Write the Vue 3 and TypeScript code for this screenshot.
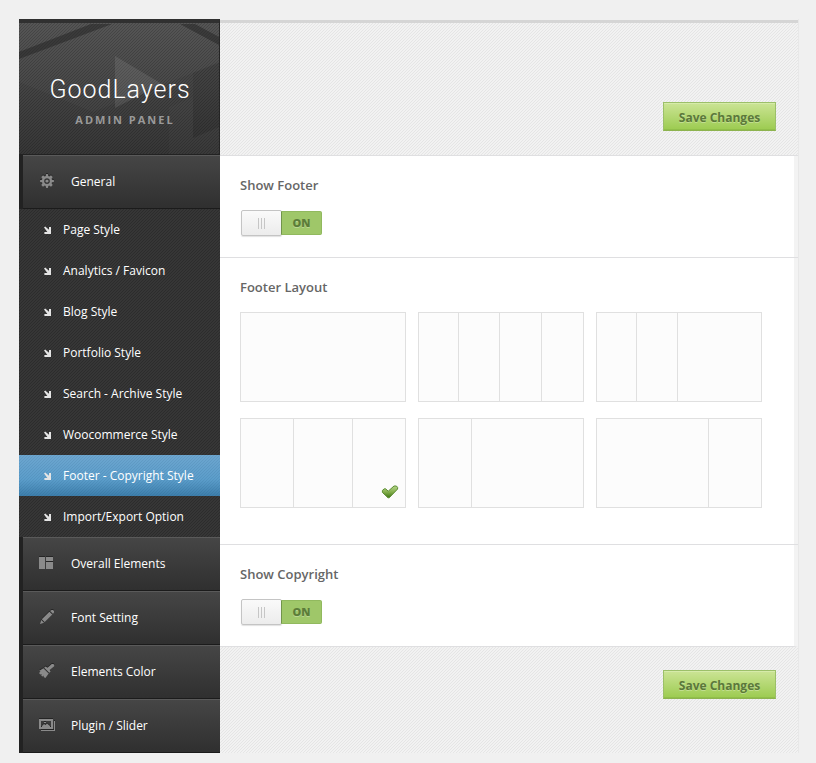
<script setup lang="ts">
import { ref } from 'vue'

type IconName = 'gear' | 'grid' | 'pencil' | 'brush' | 'gallery'

interface MenuGroup {
  label: string
  icon: IconName
  children: string[]
}

interface FooterLayout {
  id: string
  label: string
  columns: number[]
}

const menu: MenuGroup[] = [
  {
    label: 'General',
    icon: 'gear',
    children: [
      'Page Style',
      'Analytics / Favicon',
      'Blog Style',
      'Portfolio Style',
      'Search - Archive Style',
      'Woocommerce Style',
      'Footer - Copyright Style',
      'Import/Export Option',
    ],
  },
  { label: 'Overall Elements', icon: 'grid', children: [] },
  { label: 'Font Setting', icon: 'pencil', children: [] },
  { label: 'Elements Color', icon: 'brush', children: [] },
  { label: 'Plugin / Slider', icon: 'gallery', children: [] },
]

const layouts: FooterLayout[] = [
  { id: 'full', label: 'One column', columns: [100] },
  { id: 'quarters', label: 'Four columns', columns: [39, 40, 41, 41] },
  { id: 'quarters-half', label: 'Two quarters and a half', columns: [24, 25, 51] },
  { id: 'thirds', label: 'Three columns', columns: [32, 36, 32] },
  { id: 'third-left', label: 'One third and two thirds', columns: [32, 68] },
  { id: 'third-right', label: 'Two thirds and one third', columns: [68, 32] },
]

const activePage = ref('Footer - Copyright Style')
const showFooter = ref(true)
const showCopyright = ref(true)
const footerLayout = ref('thirds')
const generalOpen = ref(true)
</script>

<template>
  <div class="panel">
    <aside class="sidebar">
      <div class="brand">
        <svg class="brand-art" viewBox="0 0 200 131" preserveAspectRatio="none" aria-hidden="true">
          <path d="M0 0H200V40L174 50 74 89 0 59Z" fill="#fff" opacity=".025" />
          <path d="M0 29 72 1H93L0 36ZM161 1H176L200 14V22Z" fill="#222" opacity=".5" />
          <path d="M96 33 143 61 96 85Z" fill="#fff" opacity=".09" />
          <path d="M174 50 200 39V104L174 115Z" fill="#000" opacity=".07" />
          <path d="M150 84 174 74V115L200 104V131H150Z" fill="#fff" opacity=".015" />
        </svg>
        <div class="brand-name">GoodLayers</div>
        <div class="brand-sub">ADMIN PANEL</div>
      </div>
      <nav>
        <div v-for="group in menu" :key="group.label">
          <button class="group" type="button" @click="group.children.length && (generalOpen = !generalOpen)">
            <svg class="icon" viewBox="0 0 16 16" aria-hidden="true">
              <g v-if="group.icon === 'gear'">
                <path fill-rule="evenodd" d="M7.2 1h1.6l.5 2 1 .4L12 2.3 13.7 4l-1.1 1.7.4 1 2 .5v1.6l-2 .5-.4 1 1.1 1.7-1.7 1.7-1.7-1.1-1 .4-.5 2H7.2l-.5-2-1-.4L4 13.7 2.3 12l1.1-1.7-.4-1-2-.5V7.2l2-.5.4-1L2.3 4 4 2.3l1.7 1.1 1-.4ZM8 5.2a2.8 2.8 0 1 0 0 5.6 2.8 2.8 0 0 0 0-5.6Z" />
                <circle cx="8" cy="8" r="1.6" />
              </g>
              <path v-else-if="group.icon === 'grid'" d="M0 2h6v12H0zM7 2h7v4H7zM7 7h7v7H7z" />
              <path v-else-if="group.icon === 'pencil'" d="M11.2 2 12.6 1H14l1 1v1.4l-1 1.4ZM10.4 2.7l2.9 2.9-7.6 7.5-2.9-2.9ZM2.2 11l2.8 2.8L1 15Z" />
              <path v-else-if="group.icon === 'brush'" d="M12.8 1h1.6l.8.9v1.3L10.6 7l1 1.6-1.3 1.2L5.2 4.7l1.3-1.2 2 1.2ZM4.4 5.3l5.3 5.2L6.4 15l-1.8-1 .3-1.4-1.4.8-1.4-1.2.7-1.3-1.5.6L0 10.1l1.4-1.5L0 8Z" />
              <g v-else>
                <path fill-rule="evenodd" d="M0 2h14v10H0zM2 4v6h10V4z" />
                <path d="M15 4h1v10H2v-1h13Z" />
                <path d="M3 9 5 7l1.5 1L8 6.5 11 9v1H3ZM5 5h2v1H5z" />
              </g>
            </svg>
            {{ group.label }}
          </button>
          <ul v-if="group.children.length && generalOpen" class="children">
            <li v-for="child in group.children" :key="child">
              <a href="#" :class="['child', { active: child === activePage }]" @click.prevent="activePage = child">
                <svg class="arrow" viewBox="0 0 8 8" aria-hidden="true">
                  <path d="M1 1.6 2.2.4 6 3.8V1H8V8H1.4V6H4.4Z" />
                </svg>
                {{ child }}
              </a>
            </li>
          </ul>
        </div>
      </nav>
    </aside>

    <main class="content">
      <header class="bar top-bar">
        <button class="save" type="button">Save Changes</button>
      </header>

      <div class="options">
        <section class="option">
          <label class="title" for="show-footer">Show Footer</label>
          <label :class="['switch', { off: !showFooter }]">
            <input id="show-footer" v-model="showFooter" type="checkbox" />
            <span class="knob"><i></i><i></i><i></i></span>
            <span class="state">{{ showFooter ? 'ON' : 'OFF' }}</span>
          </label>
        </section>

        <section class="option layout-option">
          <h2 id="layout-title" class="title">Footer Layout</h2>
          <div class="layouts" role="radiogroup" aria-labelledby="layout-title">
            <label v-for="item in layouts" :key="item.id" class="layout">
              <input v-model="footerLayout" type="radio" name="layout" :value="item.id" :aria-label="item.label" />
              <span v-for="(size, i) in item.columns" :key="i" class="column" :style="{ flexGrow: size }"></span>
              <svg v-if="item.id === footerLayout" class="check" viewBox="0 0 18 14" aria-hidden="true">
                <defs>
                  <linearGradient id="check-fill" x1="0" y1="0" x2="0" y2="1">
                    <stop offset="0" stop-color="#b5d68b" />
                    <stop offset=".5" stop-color="#86b04e" />
                    <stop offset="1" stop-color="#3d7512" />
                  </linearGradient>
                </defs>
                <path d="M1.4 5.4 3.3 3.8H4.6L7.2 6.2 13 1H15.4L16.6 2.4V4L8.2 12.8H7L1.4 7.4Z" fill="url(#check-fill)" stroke="#5c8c32" stroke-linejoin="round" />
              </svg>
            </label>
          </div>
        </section>

        <section class="option">
          <label class="title" for="show-copyright">Show Copyright</label>
          <label :class="['switch', { off: !showCopyright }]">
            <input id="show-copyright" v-model="showCopyright" type="checkbox" />
            <span class="knob"><i></i><i></i><i></i></span>
            <span class="state">{{ showCopyright ? 'ON' : 'OFF' }}</span>
          </label>
        </section>
      </div>

      <footer class="bar bottom-bar">
        <button class="save" type="button">Save Changes</button>
      </footer>
    </main>
  </div>
</template>

<style>
body {
  background: #f0f0f0;
}
</style>

<style scoped>
.panel,
.panel * {
  box-sizing: border-box;
}

.panel {
  display: flex;
  margin: 19px 17px 10px 19px;
  font-family: "Open Sans", "Liberation Sans", sans-serif;
  font-size: 12px;
}

.sidebar {
  flex: 0 0 201px;
  background-color: #303030;
}

.brand {
  position: relative;
  height: 136px;
  padding-top: 52px;
  border-top: 4px solid #303030;
  border-right: 1px solid #252525;
  border-bottom: 1px solid #222;
  text-align: center;
  background:
    linear-gradient(135deg, transparent 42%, rgba(0, 0, 0, 0.18) 42% 58%, transparent 58%) 0 0 / 3px 3px,
    linear-gradient(#515151, #363636);
}

.brand-art {
  position: absolute;
  inset: 0;
  width: 100%;
  height: 100%;
}

.brand-name {
  position: relative;
  padding-left: 2px;
  font: 300 25px/30px Roboto, sans-serif;
  letter-spacing: 1px;
  color: #fff;
}

.brand-sub {
  position: relative;
  margin-top: 7px;
  padding-left: 12px;
  font-size: 11px;
  font-weight: 700;
  line-height: 16px;
  letter-spacing: 2px;
  color: #999;
}

.group {
  display: flex;
  align-items: center;
  gap: 16px;
  width: 100%;
  height: 54px;
  padding: 0 16px 1px;
  border: 0;
  border-left: 4px solid #222;
  font: inherit;
  text-align: left;
  color: #fff;
  background: linear-gradient(#464646, #2f2f2f);
  box-shadow: inset 0 1px #5a5a5a, inset 0 -1px #1b1b1b;
  cursor: pointer;
}

.icon {
  width: 16px;
  height: 16px;
  margin-bottom: 1px;
  fill: #8a8a8a;
  filter: drop-shadow(0 -1px #252525);
}

.children {
  margin: 0;
  padding: 0;
  list-style: none;
  background: linear-gradient(135deg, #363636 42%, #2c2c2c 42% 58%, #363636 58%) 0 0 / 3px 3px;
}

.child {
  display: flex;
  align-items: center;
  gap: 12px;
  height: 41px;
  padding-left: 24px;
  color: #fff;
  text-decoration: none;
}

.child.active {
  background:
    linear-gradient(135deg, transparent 42%, rgba(0, 40, 80, 0.08) 42% 58%, transparent 58%) 0 0 / 3px 3px,
    linear-gradient(#6da6cf, #5b9dca 60%, #3d7eab);
}

.arrow {
  width: 8px;
  height: 8px;
  margin-top: 1px;
  fill: #e4e4e4;
}

.content {
  display: flex;
  flex: 1;
  flex-direction: column;
  min-width: 0;
  border-right: 1px solid #e8e8e8;
}

.bar {
  display: flex;
  justify-content: flex-end;
  padding-right: 22px;
  background: linear-gradient(135deg, #f2f2f2 42%, #e5e5e5 42% 58%, #f2f2f2 58%) 0 0 / 3px 3px;
}

.top-bar {
  height: 136px;
  margin-top: 1px;
  padding-top: 79px;
  border-top: 3px solid #d5d5d5;
  margin-bottom: -1px;
}

.bottom-bar {
  flex: 1;
  padding-top: 23px;
  padding-bottom: 54px;
}

.save {
  width: 113px;
  height: 29px;
  padding: 2px 0 0;
  border: 1px solid #9cc069;
  border-bottom-color: #8db34f;
  font: inherit;
  font-weight: 700;
  color: #5b783a;
  text-shadow: 0 1px rgba(255, 255, 255, 0.3);
  background: linear-gradient(#cbe495, #9ccb50);
  box-shadow: inset 0 1px #d6ebaa, inset 0 -1px #91bf4a;
  cursor: pointer;
}

.options {
  border-right: 4px solid #f3f3f3;
  border-bottom: 1px solid #dfdfe1;
  background: #fff;
}

.option {
  min-height: 102px;
  margin-right: -4px;
  padding: 20px 36px 20px 20px;
  border-top: 1px solid #dfdfe1;
}

.layout-option {
  padding-bottom: 36px;
}

.title {
  display: block;
  margin: 0 0 16px;
  font-size: 13px;
  font-weight: 600;
  line-height: 18px;
  color: #666;
}

.switch {
  display: flex;
  align-items: center;
  width: 81px;
  height: 26px;
  margin-left: 1px;
  cursor: pointer;
}

.switch input,
.layout input {
  position: absolute;
  margin: 0;
  opacity: 0;
}

.knob {
  display: flex;
  align-items: center;
  justify-content: center;
  gap: 2px;
  flex: 0 0 41px;
  height: 26px;
  border: 1px solid #c4c4c4;
  border-radius: 2px;
  background: linear-gradient(#fafafa, #ececec);
  box-shadow: 0 1px 1px rgba(0, 0, 0, 0.12);
}

.knob i {
  width: 1px;
  height: 11px;
  background: #c6c6c6;
}

.state {
  flex: 0 0 41px;
  height: 24px;
  margin-left: -1px;
  border: 1px solid #91b95e;
  border-left-color: #71944b;
  border-radius: 0 2px 2px 0;
  font-size: 11px;
  font-weight: 800;
  line-height: 22px;
  text-align: center;
  color: #5c7d39;
  text-shadow: 0 1px rgba(255, 255, 255, 0.3);
  background: #9fc769;
}

.switch.off .state {
  border-color: #bbb;
  color: #777;
  background: #ddd;
}

.switch.off .knob {
  order: 1;
}

.layouts {
  display: flex;
  flex-wrap: wrap;
  gap: 16px 12px;
}

.layout {
  position: relative;
  display: flex;
  width: 166px;
  height: 90px;
  border: 1px solid #e0e0e0;
  background: #fcfcfc;
  cursor: pointer;
}

.column {
  flex-basis: 0;
}

.column + .column {
  border-left: 1px solid #e0e0e0;
}

.check {
  position: absolute;
  right: 6px;
  bottom: 8px;
  width: 18px;
  height: 14px;
}

input:focus-visible ~ .knob,
input:focus-visible ~ .column {
  outline: 1px solid #5b9dca;
}
</style>
